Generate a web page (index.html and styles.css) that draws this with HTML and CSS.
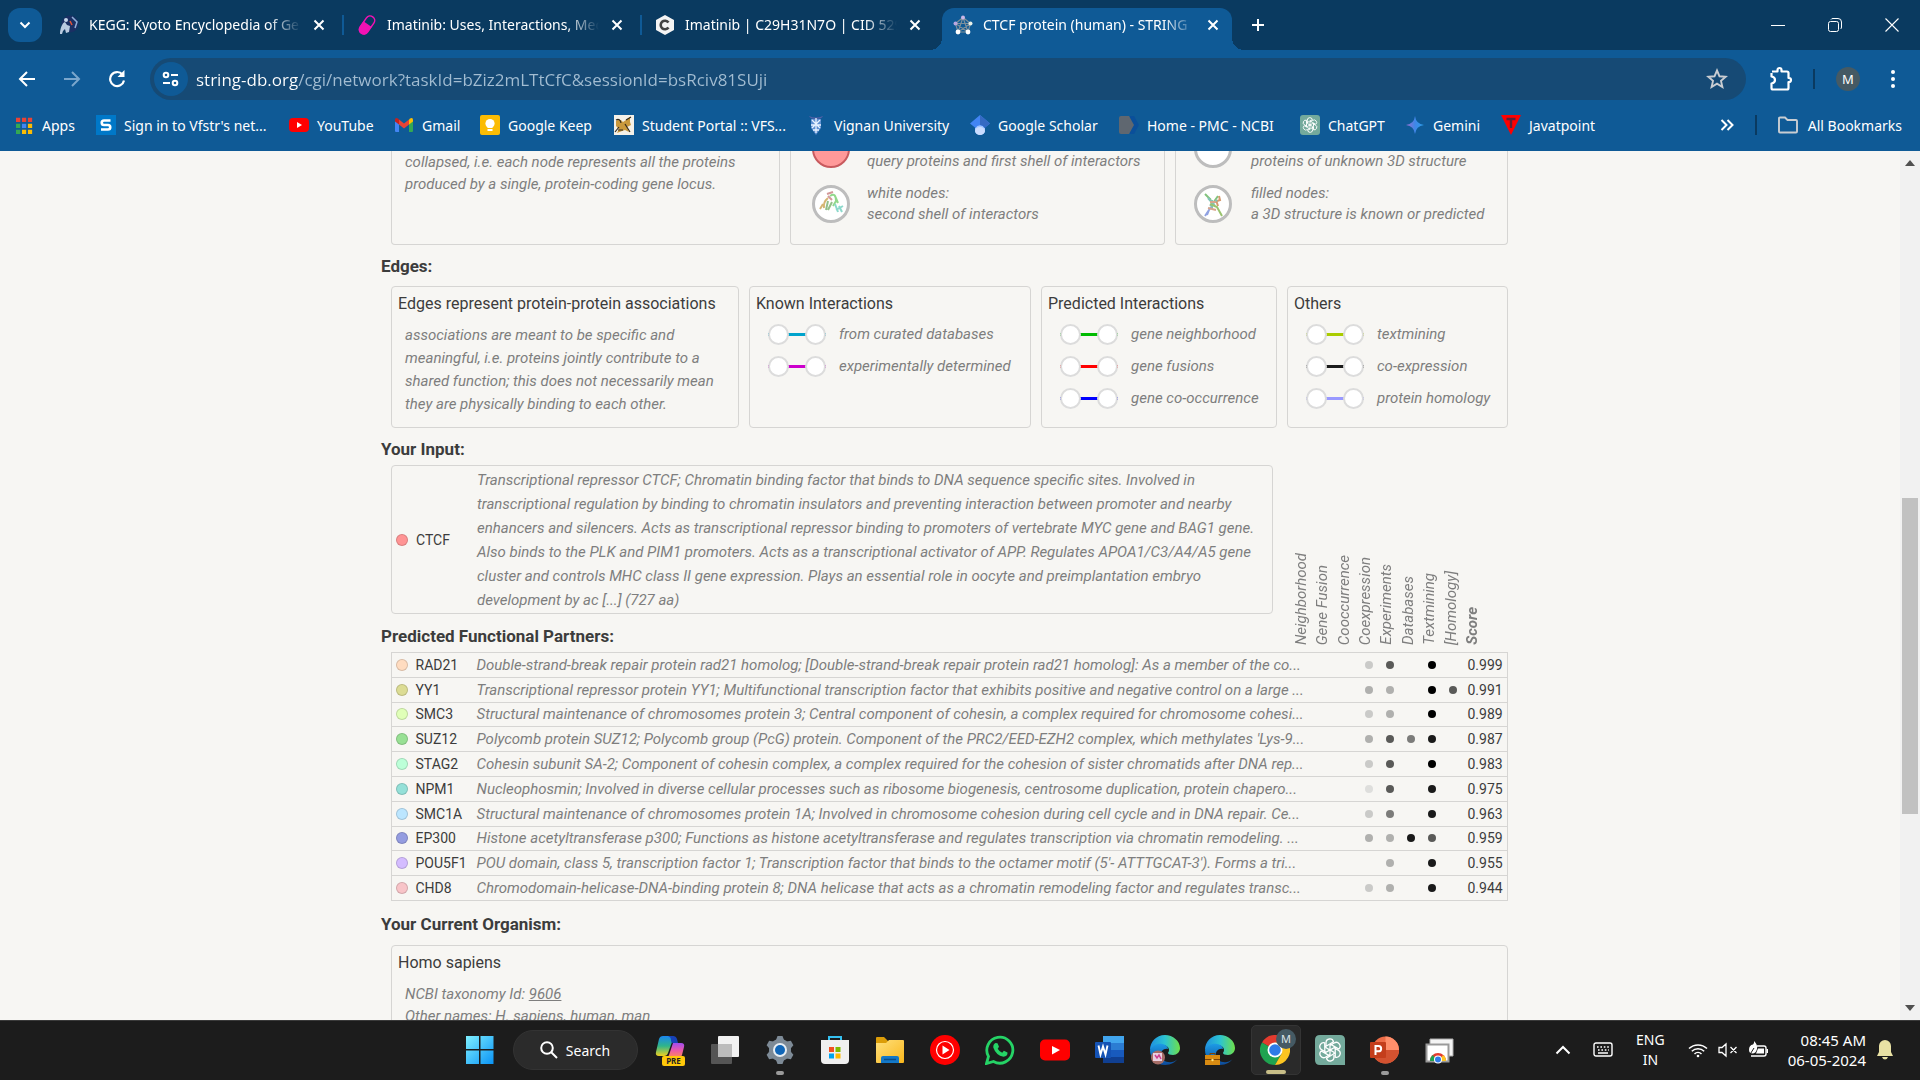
FILE: index.html
```html
<!DOCTYPE html>
<html lang="en">
<head>
<meta charset="utf-8">
<title>CTCF protein (human) - STRING interaction network</title>
<link rel="stylesheet" href="styles.css">
</head>
<body>
<svg class="defs" aria-hidden="true">
  <defs>
    <linearGradient id="gWin" x1="0" y1="0" x2="1" y2="1"><stop offset="0" stop-color="#7ff0ff"/><stop offset="1" stop-color="#0a93f5"/></linearGradient>
    <linearGradient id="gEdgeTop" x1="0" y1="0" x2="1" y2="0"><stop offset="0" stop-color="#1f8fe0"/><stop offset=".5" stop-color="#2cc3d2"/><stop offset="1" stop-color="#6fe04a"/></linearGradient>
    <linearGradient id="gEdgeLow" x1="0" y1="0" x2="0" y2="1"><stop offset="0" stop-color="#1d9be6"/><stop offset="1" stop-color="#0c4a9a"/></linearGradient>
    <linearGradient id="gFolder" x1="0" y1="0" x2="1" y2="1"><stop offset="0" stop-color="#ffe07c"/><stop offset="1" stop-color="#f9b71c"/></linearGradient>
    <linearGradient id="gGem" x1="0" y1="0" x2="1" y2="0"><stop offset="0" stop-color="#9a6fd0"/><stop offset=".5" stop-color="#3f86e8"/><stop offset="1" stop-color="#2aa0ea"/></linearGradient>
    <linearGradient id="gCopA" x1="0" y1="0" x2="0" y2="1"><stop offset="0" stop-color="#1a86f0"/><stop offset=".5" stop-color="#2fb58a"/><stop offset="1" stop-color="#f0d020"/></linearGradient>
    <linearGradient id="gCopB" x1="0" y1="0" x2="0" y2="1"><stop offset="0" stop-color="#a04cf0"/><stop offset=".5" stop-color="#ec5aa8"/><stop offset="1" stop-color="#ff9050"/></linearGradient>
    <symbol id="close" viewBox="0 0 20 20"><path d="M5.500 5.500l9 9m0-9l-9 9" stroke="#fff" stroke-width="2" fill="none"/></symbol>
    <symbol id="knot" viewBox="0 0 24 24"><g fill="none" stroke="#fff" stroke-width="1.300"><path id="petal" d="M12 12.200V7.400l4.200-2.400a3.800 3.800 0 0 1 4.600 6l-4.600-2.600-4.200-2.400"/><use href="#petal" transform="rotate(60 12 12)"/><use href="#petal" transform="rotate(120 12 12)"/><use href="#petal" transform="rotate(180 12 12)"/><use href="#petal" transform="rotate(240 12 12)"/><use href="#petal" transform="rotate(300 12 12)"/></g></symbol>
    <symbol id="chrome" viewBox="0 0 30 30"><path d="M15 15L2 7.500A15 15 0 0 1 28 7.500H15z" fill="#e33b2e"/><path d="M15 15L2 7.500a15 15 0 0 0 13 22.500l6.500-11.300z" fill="#1fa350"/><path d="M15 7.500h13A15 15 0 0 1 15 30l6.500-11.300z" fill="#fcc521"/><circle cx="15" cy="15" r="7.500" fill="#fff"/><circle cx="15" cy="15" r="5.800" fill="#2f7be8"/></symbol>
    <symbol id="edge" viewBox="0 0 30 30"><path d="M15 0C23 0 30 6 30 13c0 4-3 7-7 7-3 0-5-1-5-2s1-1 1-3c0-3-3-5-7-5C6 10 0 15 0 15 0 7 6 0 15 0z" fill="url(#gEdgeTop)"/><path d="M0 15C2 11 7 8 12 9c4 .500 6 3 6 5-4-1-8 2-7 7 1 4 5 7 11 6 3-.500 5-2 6-4-2 4-7 7-13 7C6 30 0 23 0 15z" fill="url(#gEdgeLow)"/></symbol>
  </defs>
</svg>

<header class="browser">
  <div class="tabstrip">
    <button class="tab-search" aria-label="Search tabs"><svg width="14" height="14" viewBox="0 0 14 14"><path d="M2.500 4.500L7 9l4.500-4.500" stroke="#fff" stroke-width="2" fill="none"/></svg></button>
    <div class="tabs">
      <div class="tab">
        <svg class="fav" viewBox="0 0 20 20"><circle cx="11" cy="9" r="8.500" fill="#1b2f63"/><path d="M1 19c0-5 2-11 5-12l2 3 3 1-1 6-3 1-1-4-2 2-1 3z" fill="#b9cbe0"/><circle cx="7" cy="5" r="2" fill="#c5d6ea"/><path d="M13 2l5 5-2 6" stroke="#8fb0d8" stroke-width="1.500" fill="none"/><path d="M11 6l2 4" stroke="#e0563b" stroke-width="1.500"/></svg>
        <span class="tab-title">KEGG: Kyoto Encyclopedia of Ge</span><button class="tab-close" aria-label="Close tab"><svg width="20" height="20"><use href="#close"/></svg></button>
      </div>
      <div class="tab divided">
        <svg class="fav" viewBox="0 0 20 20"><g transform="rotate(35 10 10)"><rect x="5.500" y="0" width="9" height="20" rx="4.500" fill="none" stroke="#f312b4" stroke-width="1.500"/><path d="M5 9h10v6.500a5 5 0 0 1-10 0z" fill="#f312b4"/></g></svg>
        <span class="tab-title">Imatinib: Uses, Interactions, Mec</span><button class="tab-close" aria-label="Close tab"><svg width="20" height="20"><use href="#close"/></svg></button>
      </div>
      <div class="tab divided">
        <svg class="fav" viewBox="0 0 20 20"><path d="M10 0l9 5v10l-9 5-9-5V5z" fill="#f4f4f4"/><path d="M13.500 7.500A4.300 4.300 0 1 0 13.500 12.500" fill="none" stroke="#444" stroke-width="2.600"/></svg>
        <span class="tab-title">Imatinib | C29H31N7O | CID 529</span><button class="tab-close" aria-label="Close tab"><svg width="20" height="20"><use href="#close"/></svg></button>
      </div>
      <div class="tab active">
        <svg class="fav" viewBox="0 0 20 20"><path d="M10 2.500L2.500 8.500 5 17h10l2.500-8.500zM10 2.500L5 17M10 2.500L15 17M2.500 8.500h15L5 17M2.500 8.500L15 17" fill="none" stroke="#7d8f9a" stroke-width="1.200"/><circle cx="10" cy="2.500" r="2" fill="#c9b7e8"/><circle cx="2.500" cy="8.500" r="2" fill="#b9a7e0"/><circle cx="17.500" cy="8.500" r="2" fill="#e8f0e8"/><circle cx="5" cy="17" r="2.400" fill="#fff"/><circle cx="15" cy="17" r="2.400" fill="#fff"/></svg>
        <span class="tab-title">CTCF protein (human) - STRING</span><button class="tab-close" aria-label="Close tab"><svg width="20" height="20"><use href="#close"/></svg></button>
      </div>
    </div>
    <button class="new-tab" aria-label="New tab"><svg width="14" height="14"><path d="M7 1v12M1 7h12" stroke="#fff" stroke-width="2"/></svg></button>
    <div class="window-controls">
      <button aria-label="Minimize"><svg width="14" height="14"><path d="M0 7.500h14" stroke="#fff"/></svg></button>
      <button aria-label="Restore"><svg width="14" height="14" fill="none" stroke="#fff"><rect x=".5" y="3.500" width="10" height="10" rx="2"/><path d="M3 1.500q.500-1 2-1h5q3.500 0 3.500 3.500v5q0 1.500-1 2"/></svg></button>
      <button aria-label="Close"><svg width="14" height="14"><path d="M.500 .500l13 13m0-13l-13 13" stroke="#fff" stroke-width="1.100"/></svg></button>
    </div>
  </div>

  <div class="toolbar">
    <nav class="nav-buttons">
      <button aria-label="Back"><svg width="18" height="18"><path d="M17 9H2.500M9 2L2 9l7 7" stroke="#fff" stroke-width="2" fill="none"/></svg></button>
      <button aria-label="Forward"><svg width="18" height="18"><path d="M1 9h14.500M9 2l7 7-7 7" stroke="#7aa6cc" stroke-width="2" fill="none"/></svg></button>
      <button aria-label="Reload"><svg width="18" height="18"><path d="M14.500 4.500A7 7 0 1 0 16 10.500" stroke="#fff" stroke-width="2.200" fill="none"/><path d="M16.500 0v7h-7z" fill="#fff"/></svg></button>
    </nav>
    <div class="omnibox">
      <button class="site-info" aria-label="View site information"><svg width="18" height="16" fill="none" stroke="#fff" stroke-width="2"><circle cx="4" cy="4" r="2.300"/><path d="M9 4h7M1 12h7"/><circle cx="13" cy="12" r="2.300"/></svg></button>
      <input class="url" type="text" aria-label="Address" value="string-db.org/cgi/network?taskId=bZiz2mLTtCfC&amp;sessionId=bsRciv81SUji">
      <button class="star" aria-label="Bookmark this tab"><svg width="22" height="22" viewBox="0 0 22 22"><path d="M11 2.500l2.500 5.800 6.200.500-4.700 4.100 1.400 6.100-5.400-3.300L5.600 19 7 12.900 2.300 8.800l6.200-.500z" stroke="#c9cdd2" stroke-width="1.900" fill="none"/></svg></button>
    </div>
    <div class="tool-actions">
      <button aria-label="Extensions"><svg width="24" height="26" viewBox="0 0 24 26"><path d="M3 5.500h5.500V4a2 2 0 0 1 4 0v1.500H18q1.500 0 1.500 1.500v5h.500a2 2 0 0 1 0 4h-.500v6q0 1.500-1.500 1.500H4q-1.500 0-1.500-1.500v-4.500q3.500-.500 3.500-3.500t-3.500-3.500V7" stroke="#fff" stroke-width="2.200" fill="none" stroke-linejoin="round"/></svg></button>
      <span class="rule"></span>
      <button class="avatar" aria-label="Profile">M</button>
      <button aria-label="Menu"><svg width="6" height="20" fill="#fff"><circle cx="3" cy="3" r="2"/><circle cx="3" cy="10" r="2"/><circle cx="3" cy="17" r="2"/></svg></button>
    </div>
  </div>

  <nav class="bookmarks">
    <div class="bookmark-list">
      <a href="#"><svg viewBox="0 0 20 20" class="narrow"><g fill="#ea4335"><path d="M0 1h5v5H0zM7 1h5v5H7zM14 1h5v5h-5z"/></g><path d="M0 8h5v5H0zM0 15h5v5H0z" fill="#34a853"/><path d="M7 8h5v5H7z" fill="#4285f4"/><path d="M7 15h5v5H7zM14 8h5v5h-5zM14 15h5v5h-5z" fill="#fbbc04"/></svg>Apps</a>
      <a href="#"><svg viewBox="0 0 20 20"><path d="M0 0h20v20H0z" fill="#0078c8"/><path d="M14.500 5.500H8a2.200 2.200 0 0 0 0 4.500h4a2.200 2.200 0 0 1 0 4.500H5" stroke="#fff" stroke-width="2.600" fill="none"/></svg>Sign in to Vfstr's net...</a>
      <a href="#"><svg viewBox="0 0 20 20"><rect y="3" width="20" height="14" rx="4" fill="#f00"/><path d="M8 7l5 3-5 3z" fill="#fff"/></svg>YouTube</a>
      <a href="#"><svg viewBox="0 0 20 20"><path d="M1 5v11q0 1 1 1h3V8z" fill="#4285f4"/><path d="M19 5v11q0 1-1 1h-3V8z" fill="#34a853"/><path d="M5 4.500l5 4 5-4v5l-5 4-5-4z" fill="#ea4335"/><path d="M1 5q0-3 3-1.500L5 4.500v5L1 6.500z" fill="#c5221f"/><path d="M19 5q0-3-3-1.500l-1 1v5l4-3z" fill="#fbbc04"/></svg>Gmail</a>
      <a href="#"><svg viewBox="0 0 20 20"><rect width="20" height="20" rx="2" fill="#fbbc04"/><circle cx="10" cy="8.500" r="4.600" fill="#fff"/><path d="M7.500 11h5v2h-5zM7.500 14h5v2h-5z" fill="#fff"/></svg>Google Keep</a>
      <a href="#"><svg viewBox="0 0 20 20"><path d="M0 0h20v20H0z" fill="#f5f1e8"/><path d="M2 6q4-3 7 1l3-2 4-3v5l1 3-4 2 2 5-4-2-3 1-5 2 2-4-3-3z" fill="#c9993c"/><path d="M2 5q4-2 5 3M5 12l-4 5M11 9l5 8M12 5l5-3M4 15h5" stroke="#332a1c" stroke-width="1.200" fill="none"/></svg>Student Portal :: VFS...</a>
      <a href="#"><svg viewBox="0 0 20 20"><path d="M3 1q7 3 14 0-1 3-7 3T3 1z" fill="#5261a8"/><path d="M5 4h10v9l-5 7-5-7z" fill="#5e8fd0"/><path d="M10 3v15M6 5l8 8M14 5l-8 8M5 10h10M7 15h6" stroke="#e9f3ff" stroke-width="1.300"/></svg>Vignan University</a>
      <a href="#"><svg viewBox="0 0 20 20"><path d="M10 8a5 5 0 0 1 5 5v2a5 5 0 0 1-10 0v-2a5 5 0 0 1 5-5z" fill="#a0c3ff"/><path d="M10 0L0 8.500 5.500 13a5 5 0 0 1 9 0L20 8.500z" fill="#4285f4"/><path d="M10 0v10q3 0 4.500 3L20 8.500z" fill="#356ac3"/><ellipse cx="10" cy="16" rx="5" ry="4" fill="#c9dcff"/></svg>Google Scholar</a>
      <a href="#"><svg viewBox="0 0 20 20"><path d="M11 1h4l5 9-5 9h-4z" fill="#0a4f9a"/><path d="M2 1h8l5 9-5 9H2q-2 0-2-2V3q0-2 2-2z" fill="#5f6770"/></svg>Home - PMC - NCBI</a>
      <a href="#"><svg viewBox="0 0 20 20"><rect width="20" height="20" rx="3" fill="#74aa9c"/><use href="#knot" x="2" y="2" width="16" height="16"/></svg>ChatGPT</a>
      <a href="#"><svg viewBox="0 0 20 20"><path d="M10 1q1 8 9 9-8 1-9 9-1-8-9-9 8-1 9-9z" fill="url(#gGem)"/></svg>Gemini</a>
      <a href="#"><svg viewBox="0 0 20 20"><path d="M0 0h20L10 20z" fill="#f00"/><path d="M5.500 4h9M10 4v9" stroke="#5b2238" stroke-width="2.400"/></svg>Javatpoint</a>
    </div>
    <button class="more" aria-label="More bookmarks"><svg width="14" height="12"><path d="M1.500 1l5 5-5 5M7.500 1l5 5-5 5" stroke="#fff" stroke-width="2" fill="none"/></svg></button>
    <span class="rule"></span>
    <a class="all" href="#"><svg viewBox="0 0 22 18"><path d="M2 15.500v-13q0-1 1-1h5l2.500 2.500H19q1 0 1 1v10.500q0 1-1 1H3q-1 0-1-1z" fill="none" stroke="#c9cdd2" stroke-width="1.900"/></svg>All Bookmarks</a>
  </nav>
</header>

<div class="viewport">
  <main class="page">
    <div class="content">
      <div class="cards nodes">
        <section class="card first"><p class="note">collapsed, i.e. each node represents all the proteins<br>produced by a single, protein-coding gene locus.</p></section>
        <section class="card">
          <div class="node-row top"><svg width="40" height="20" viewBox="0 20 40 20"><circle cx="20" cy="18" r="18" fill="#ff9999" stroke="#c85a5e" stroke-width="2"/></svg><p>query proteins and first shell of interactors</p></div>
          <div class="node-row"><svg width="40" height="40"><circle cx="20" cy="20" r="17.500" fill="#fff" stroke="#bdbdbd" stroke-width="3"/><g fill="none" stroke-width="2" opacity=".8"><path d="M16 10l6-2M17 12l4 4" stroke="#c98080"/><path d="M19 12q6-4 6 5l-3 5M24 12l3 7" stroke="#78cf70"/><path d="M17 14q-5 4-4 10M12 20l-3 5" stroke="#cba552"/><path d="M17 17l-2 9M21 18l-4 8" stroke="#79b16c"/><path d="M24 20l3 8M28 22l3 6M25 26l7-4" stroke="#70d0c0"/></g></svg><p>white nodes:<br>second shell of interactors</p></div>
        </section>
        <section class="card">
          <div class="node-row top"><svg width="40" height="20" viewBox="0 20 40 20"><circle cx="20" cy="18" r="17.500" fill="#fff" stroke="#bdbdbd" stroke-width="3"/></svg><p>proteins of unknown 3D structure</p></div>
          <div class="node-row"><svg width="40" height="40"><circle cx="20" cy="20" r="17.500" fill="#fff" stroke="#bdbdbd" stroke-width="3"/><g fill="none" stroke-width="2" opacity=".9"><path d="M12 10l6 6M25 12l-5 7" stroke="#75bd70"/><path d="M26 12l1 4-6 2M23 16l2 6" stroke="#cf8f60"/><path d="M15 14l7 8M17 22l7-6M19 16v9" stroke="#75bdb0"/><path d="M17 20l7 3 5 9" stroke="#90bd60"/><path d="M18 23l-6 9M16 26l-2 5" stroke="#8599df"/><path d="M15 24l8 2M17 18h6" stroke="#d39c80"/></g></svg><p>filled nodes:<br>a 3D structure is known or predicted</p></div>
        </section>
      </div>

      <h2>Edges:</h2>
      <div class="cards edges">
        <section class="card"><h3>Edges represent protein-protein associations</h3><p class="note">associations are meant to be specific and<br>meaningful, i.e. proteins jointly contribute to a<br>shared function; this does not necessarily mean<br>they are physically binding to each other.</p></section>
        <section class="card"><h3>Known Interactions</h3>
          <ul><li class="e-database"><i></i>from curated databases</li><li class="e-experiment"><i></i>experimentally determined</li></ul></section>
        <section class="card"><h3>Predicted Interactions</h3>
          <ul><li class="e-neighbor"><i></i>gene neighborhood</li><li class="e-fusion"><i></i>gene fusions</li><li class="e-cooccur"><i></i>gene co-occurrence</li></ul></section>
        <section class="card"><h3>Others</h3>
          <ul><li class="e-text"><i></i>textmining</li><li class="e-coexp"><i></i>co-expression</li><li class="e-homology"><i></i>protein homology</li></ul></section>
      </div>

      <div class="input-area">
        <div class="input-side">
          <h2>Your Input:</h2>
          <section class="card input-card">
            <span class="ball b-ctcf"></span><span class="gene">CTCF</span>
            <p>Transcriptional repressor CTCF; Chromatin binding factor that binds to DNA sequence specific sites. Involved in<br>transcriptional regulation by binding to chromatin insulators and preventing interaction between promoter and nearby<br>enhancers and silencers. Acts as transcriptional repressor binding to promoters of vertebrate MYC gene and BAG1 gene.<br>Also binds to the PLK and PIM1 promoters. Acts as a transcriptional activator of APP. Regulates APOA1/C3/A4/A5 gene<br>cluster and controls MHC class II gene expression. Plays an essential role in oocyte and preimplantation embryo<br>development by ac [...] (727 aa)</p>
          </section>
          <h2 class="partners-title">Predicted Functional Partners:</h2>
        </div>
        <div class="channel-labels"><span>Neighborhood</span><span>Gene Fusion</span><span>Cooccurrence</span><span>Coexpression</span><span>Experiments</span><span>Databases</span><span>Textmining</span><span>[Homology]</span><strong>Score</strong></div>
      </div>

      <table class="partners">
        <colgroup><col class="c-ball"><col class="c-gene"><col><col class="c-dot"><col class="c-dot"><col class="c-dot"><col class="c-dot"><col class="c-dot"><col class="c-dot"><col class="c-dot"><col class="c-dot"><col class="c-score"></colgroup>
        <tbody>
        <tr><td><span class="ball b-rad21"></span></td><td>RAD21</td><td>Double-strand-break repair protein rad21 homolog; [Double-strand-break repair protein rad21 homolog]: As a member of the co...</td><td></td><td></td><td></td><td><b class="d1"></b></td><td><b class="d4"></b></td><td></td><td><b class="d6"></b></td><td></td><td>0.999</td></tr>
        <tr><td><span class="ball b-yy1"></span></td><td>YY1</td><td>Transcriptional repressor protein YY1; Multifunctional transcription factor that exhibits positive and negative control on a large ...</td><td></td><td></td><td></td><td><b class="d2"></b></td><td><b class="d2"></b></td><td></td><td><b class="d6"></b></td><td><b class="d4"></b></td><td>0.991</td></tr>
        <tr><td><span class="ball b-smc3"></span></td><td>SMC3</td><td>Structural maintenance of chromosomes protein 3; Central component of cohesin, a complex required for chromosome cohesi...</td><td></td><td></td><td></td><td><b class="d1"></b></td><td><b class="d2"></b></td><td></td><td><b class="d6"></b></td><td></td><td>0.989</td></tr>
        <tr><td><span class="ball b-suz12"></span></td><td>SUZ12</td><td>Polycomb protein SUZ12; Polycomb group (PcG) protein. Component of the PRC2/EED-EZH2 complex, which methylates 'Lys-9...</td><td></td><td></td><td></td><td><b class="d2"></b></td><td><b class="d4"></b></td><td><b class="d3"></b></td><td><b class="d5"></b></td><td></td><td>0.987</td></tr>
        <tr><td><span class="ball b-stag2"></span></td><td>STAG2</td><td>Cohesin subunit SA-2; Component of cohesin complex, a complex required for the cohesion of sister chromatids after DNA rep...</td><td></td><td></td><td></td><td><b class="d1"></b></td><td><b class="d4"></b></td><td></td><td><b class="d6"></b></td><td></td><td>0.983</td></tr>
        <tr><td><span class="ball b-npm1"></span></td><td>NPM1</td><td>Nucleophosmin; Involved in diverse cellular processes such as ribosome biogenesis, centrosome duplication, protein chapero...</td><td></td><td></td><td></td><td><b class="d0"></b></td><td><b class="d4"></b></td><td></td><td><b class="d5"></b></td><td></td><td>0.975</td></tr>
        <tr><td><span class="ball b-smc1a"></span></td><td>SMC1A</td><td>Structural maintenance of chromosomes protein 1A; Involved in chromosome cohesion during cell cycle and in DNA repair. Ce...</td><td></td><td></td><td></td><td><b class="d1"></b></td><td><b class="d3"></b></td><td></td><td><b class="d5"></b></td><td></td><td>0.963</td></tr>
        <tr><td><span class="ball b-ep300"></span></td><td>EP300</td><td>Histone acetyltransferase p300; Functions as histone acetyltransferase and regulates transcription via chromatin remodeling. ...</td><td></td><td></td><td></td><td><b class="d2"></b></td><td><b class="d2"></b></td><td><b class="d5"></b></td><td><b class="d4"></b></td><td></td><td>0.959</td></tr>
        <tr><td><span class="ball b-pou5f1"></span></td><td>POU5F1</td><td>POU domain, class 5, transcription factor 1; Transcription factor that binds to the octamer motif (5'- ATTTGCAT-3'). Forms a tri...</td><td></td><td></td><td></td><td></td><td><b class="d2"></b></td><td></td><td><b class="d5"></b></td><td></td><td>0.955</td></tr>
        <tr><td><span class="ball b-chd8"></span></td><td>CHD8</td><td>Chromodomain-helicase-DNA-binding protein 8; DNA helicase that acts as a chromatin remodeling factor and regulates transc...</td><td></td><td></td><td></td><td><b class="d1"></b></td><td><b class="d2"></b></td><td></td><td><b class="d5"></b></td><td></td><td>0.944</td></tr>
        </tbody>
      </table>

      <h2 class="organism-title">Your Current Organism:</h2>
      <section class="card organism"><h3>Homo sapiens</h3><p class="note">NCBI taxonomy Id: <a href="#">9606</a><br>Other names: H. sapiens, human, man</p></section>
    </div>
  </main>
  <div class="scrollbar" aria-hidden="true"><svg width="10" height="6"><path d="M0 6l5-6 5 6z" fill="#505050"/></svg><div class="track"><div class="thumb"></div></div><svg width="10" height="6"><path d="M0 0l5 6 5-6z" fill="#505050"/></svg></div>
</div>

<footer class="taskbar">
  <div class="apps">
    <button aria-label="Start"><svg width="30" height="30" fill="url(#gWin)"><path d="M1 1h13v13H1zM15.500 1h13v13h-13zM1 15.500h13v13.500H1zM15.500 15.500h13v13.500h-13z"/></svg></button>
    <div class="search-slot"><button class="search"><svg width="18" height="18"><circle cx="7" cy="7" r="5.800" fill="none" stroke="#fff" stroke-width="2"/><path d="M11 11l6 6" stroke="#fff" stroke-width="2"/></svg>Search</button></div>
    <button aria-label="Copilot"><svg width="30" height="32" viewBox="0 0 30 32"><path d="M8 2h8q3 0 4 3l1 3h-4l-4 11q-1 3-4 3H4q-4 0-3-4L4 5q1-3 4-3z" fill="url(#gCopA)"/><path d="M13 2h5q3 0 4 3l1 4h-5q-2 0-2-3t-3-4z" fill="#1742b8"/><path d="M18 9h8q4 0 3 4l-2 8q-1 3-4 3H11q2 0 3-3z" fill="url(#gCopB)"/><rect x="7" y="22" width="23" height="10" rx="2" fill="#ffc80a"/><text x="18.500" y="30" class="pre">PRE</text></svg></button>
    <button aria-label="Task view"><svg width="30" height="30"><rect x="8" y="1" width="21" height="21" rx="1" fill="#f1f1f1"/><rect x="1" y="9" width="21" height="20" rx="1" fill="#555"/><path d="M8 9h14v13H8z" fill="#bcbcbc"/></svg></button>
    <button class="running" aria-label="Settings"><svg width="30" height="30" viewBox="0 0 30 30"><g fill="#7d8a96"><circle cx="15" cy="15" r="11"/><path id="tooth" d="M11 5l1.500-4h5L19 5v20l-1.500 4h-5L11 25z"/><use href="#tooth" transform="rotate(60 15 15)"/><use href="#tooth" transform="rotate(120 15 15)"/></g><circle cx="15" cy="15" r="7" fill="#e7eef4"/><circle cx="15" cy="15" r="5" fill="#1066b8"/></svg></button>
    <button aria-label="Microsoft Store"><svg width="30" height="30"><path d="M9 6V2h12v4" stroke="#35c1f1" stroke-width="2" fill="none"/><path d="M1 5h28v20q0 4-4 4H5q-4 0-4-4z" fill="#f0f0f0"/><path d="M9 12h5v5H9z" fill="#f25022"/><path d="M15.500 12h5v5h-5z" fill="#7fba00"/><path d="M9 18.500h5v5H9z" fill="#00a4ef"/><path d="M15.500 18.500h5v5h-5z" fill="#ffb900"/></svg></button>
    <button aria-label="File Explorer"><svg width="30" height="30"><path d="M1 3q0-1 1-1h7l4 4v6H1z" fill="#dc9d08"/><path d="M1 8h10l3-3h14q1 0 1 1v21q0 1-1 1H2q-1 0-1-1z" fill="url(#gFolder)"/><path d="M6 28v-5q0-2 2-2h14q2 0 2 2v5z" fill="#1378c8"/><path d="M9 24.500h12" stroke="#0b4d88" stroke-width="1.500"/></svg></button>
    <button aria-label="YouTube Music"><svg width="30" height="30"><circle cx="15" cy="15" r="15" fill="#f00"/><circle cx="15" cy="15" r="8.500" fill="none" stroke="#fff" stroke-width="1.200"/><path d="M12.500 10.500l7 4.500-7 4.500z" fill="#fff"/></svg></button>
    <button aria-label="WhatsApp"><svg width="30" height="30"><path d="M1.500 28.500l2-7A13 13 0 1 1 8.500 26.500z" fill="none" stroke="#25d366" stroke-width="2.800"/><path d="M10.500 8l2 .300 1.500 3.500-1.300 2q1.500 2.800 4.500 4l1.700-2 3.600 1.700q.300 4-4 4.200Q11 20.500 8.300 12.500 8 9 10.500 8z" fill="#25d366"/></svg></button>
    <button aria-label="YouTube"><svg width="30" height="30"><rect y="4.500" width="30" height="21" rx="5" fill="#f00"/><path d="M12 11l8 4-8 4.500z" fill="#fff"/></svg></button>
    <button aria-label="Word"><svg width="30" height="30"><path d="M8 1h21v7H8z" fill="#41a5ee"/><path d="M8 8h21v7H8z" fill="#2b7cd3"/><path d="M8 15h21v7H8z" fill="#185abd"/><path d="M8 22h21v6H8z" fill="#103f91"/><rect y="7" width="16" height="16" rx="1" fill="#1553b5"/><path d="M3.500 10.500l2 9 2.500-8 2.500 8 2-9" stroke="#fff" stroke-width="1.900" fill="none"/></svg></button>
    <button aria-label="Edge profile 1"><svg width="30" height="30"><use href="#edge"/><circle cx="8" cy="22.500" r="7" fill="#a56d66"/><path d="M3 18h9v8H3z" fill="#ead0e0"/><path d="M5 20l2 3 2-3 2 4" stroke="#ce3d91" stroke-width="1.500" fill="none"/></svg></button>
    <button aria-label="Edge profile 2"><svg width="30" height="30"><use href="#edge"/><path d="M0 20h15v10H0z" fill="#d88b12"/><path d="M0 24.500h15M5 20v-1.500h5V20" stroke="#7a4306" fill="none"/><circle cx="7.500" cy="25" r="1.200" fill="#ffe37a"/></svg></button>
    <button class="current" aria-label="Chrome"><svg width="36" height="36" viewBox="0 0 36 36"><use href="#chrome" x="0" y="6" width="30" height="30"/><circle cx="26" cy="10" r="10" fill="#455a64"/><text x="26" y="14" class="badge-m">M</text></svg></button>
    <button aria-label="ChatGPT"><svg width="30" height="30"><path d="M5 0h20q5 0 5 5v25H5q-5 0-5-5V5q0-5 5-5z" fill="#74aa9c"/><use href="#knot" x="3" y="3" width="24" height="24"/></svg></button>
    <button class="running" aria-label="PowerPoint"><svg width="30" height="30"><circle cx="15.500" cy="15" r="13.500" fill="#ed6c47"/><path d="M15.500 1.500A13.500 13.500 0 0 1 29 15H15.500z" fill="#ff8f6b"/><path d="M2 15h27a13.500 13.500 0 0 1-27 0z" fill="#d35230"/><rect y="7" width="16" height="16" rx="1" fill="#c43e1c"/><path d="M5.500 20v-9h3a2.500 2.500 0 0 1 0 5.300h-3" stroke="#fff" stroke-width="2" fill="none"/></svg></button>
    <button aria-label="Remote Desktop"><svg width="30" height="30"><path d="M5 4h23v17H5z" fill="#f4f4f4" stroke="#aaa"/><path d="M1.500 9.500h22v17h-22z" fill="#fff" stroke="#999" stroke-width="2"/><path d="M5 26a8 8 0 0 1 16 0z" fill="#e33b2e"/><path d="M5 26q0-4 3-6l4 6z" fill="#1fa350"/><path d="M21 26q0-4-3-6l-4 6z" fill="#fcc521"/><circle cx="13" cy="24.500" r="4" fill="#fff"/><circle cx="13" cy="24.500" r="3" fill="#2f7be8"/></svg></button>
  </div>
  <div class="tray">
    <svg width="16" height="10"><path d="M1.500 8.500L8 2l6.500 6.500" stroke="#fff" stroke-width="2" fill="none"/></svg>
    <svg width="20" height="16" fill="none" stroke="#fff"><rect x="1" y="1" width="18" height="13" rx="2" stroke-width="1.400"/><path d="M4 5h12M5 8h11" stroke-width="1.600" stroke-dasharray="1.600 1.800"/><path d="M5 11h10" stroke-width="1.500"/></svg>
    <div class="lang"><span>ENG</span><span>IN</span></div>
    <svg width="20" height="16" fill="none" stroke="#fff" stroke-width="1.500"><path d="M1 6.500a13 13 0 0 1 18 0M3.800 9.300a9 9 0 0 1 12.400 0M6.500 12a5 5 0 0 1 7 0"/><circle cx="10" cy="14" r="1.300" fill="#fff" stroke="none"/></svg>
    <svg width="20" height="16" fill="none" stroke="#fff" stroke-width="1.300"><path d="M1 5.500v5h3l4 3.500V2L4 5.500zM12.500 5l6 6m0-6l-6 6"/></svg>
    <svg width="20" height="18"><path d="M9 5h7q2 0 2 2v6q0 2-2 2H3" fill="none" stroke="#fff" stroke-width="1.400"/><path d="M10 7.500h6v5h-8zM18.500 8h1.500v4h-1.500z" fill="#fff"/><path d="M1 9Q1 4 5 3.500 6.500 3 6 0q4 4 3 8-1 4-4 4.500Q1 12.500 1 9z" fill="#fff"/><path d="M1 15l5-8" stroke="#1c1c1c"/></svg>
    <div class="clock"><span>08:45 AM</span><span>06-05-2024</span></div>
    <svg width="18" height="20"><path d="M9 0a6 6 0 0 1 6 6v6l2 4H1l2-4V6a6 6 0 0 1 6-6zM6 17h6q-1 2.500-3 2.500T6 17z" fill="#e9e2a4"/></svg>
  </div>
</footer>
</body>
</html>
```
FILE: styles.css
```css
*, *::before, *::after { box-sizing: border-box; }
body { margin: 0; height: 100vh; display: flex; flex-direction: column; overflow: hidden; font-family: "Noto Sans", sans-serif; background: #f7f6f3; }
button { border: 0; padding: 0; background: none; color: inherit; font: inherit; display: flex; align-items: center; justify-content: center; }
a { color: inherit; text-decoration: none; }
svg { display: block; flex: none; }
.defs { position: absolute; width: 0; height: 0; }

/* browser frame */
.browser { flex: none; background: #0f5a96; color: #fff; font-size: 14px; }
.tabstrip { display: flex; align-items: center; height: 50px; background: #0a3a60; }
.tab-search { width: 34px; height: 34px; margin: 0 2px 0 8px; border-radius: 12px; background: #0f5a96; }
.tabs { display: flex; align-self: stretch; }
.tab { position: relative; display: flex; align-items: center; width: 298px; padding: 0 13px 0 15px; }
.fav { width: 20px; height: 20px; margin-right: 10px; }
.tab-title { flex: 1; overflow: hidden; white-space: nowrap; line-height: 24px; mask-image: linear-gradient(90deg, #000 180px, transparent 212px); }
.tab-close { width: 20px; height: 20px; }
.tab.divided::before { content: ""; position: absolute; left: 0; top: 15px; width: 2px; height: 20px; background: #0f5a96; }
.tab.active { z-index: 0; }
.tab.active::before { content: ""; position: absolute; z-index: -1; inset: 8px 4px 0; border-radius: 12px 12px 0 0; background: #0f5a96; }
.tab.active::after { content: ""; position: absolute; z-index: -1; left: -8px; right: -8px; bottom: 0; height: 12px; background: radial-gradient(circle at 0 0, transparent 12px, #0f5a96 12px) left / 12px 12px no-repeat, radial-gradient(circle at 100% 0, transparent 12px, #0f5a96 12px) right / 12px 12px no-repeat; }
.new-tab { width: 34px; height: 34px; margin-left: 5px; }
.window-controls { display: flex; margin-left: auto; }
.window-controls button { width: 57px; height: 48px; }

.toolbar { display: flex; align-items: center; height: 57px; padding: 0 10px 0 5px; }
.nav-buttons { display: flex; gap: 1px; }
.nav-buttons button { width: 44px; height: 40px; }
.omnibox { flex: 1; display: flex; align-items: center; height: 42px; margin: 1px 0 0 11px; padding: 0 18px 0 4px; border-radius: 21px; background: #164a75; }
.site-info { width: 34px; height: 34px; border-radius: 17px; background: #0f5a96; }
.url { flex: 1; height: 32px; margin-left: 8px; padding: 0; border: 0; outline: 0; font: 17px "Open Sans", sans-serif; color: transparent; background: linear-gradient(90deg, #fff 102px, #a3bdd2 102px) text; }
.tool-actions { display: flex; align-items: center; margin-left: 18px; }
.tool-actions button { width: 34px; height: 34px; }
.rule { width: 2px; height: 20px; background: #0a3a60; }
.tool-actions .rule { margin: 0 21px 0 15px; }
.tool-actions .avatar { width: 24px; height: 24px; margin-right: 16px; border-radius: 12px; background: #455a64; font-size: 13px; }

.bookmarks { display: flex; align-items: center; height: 44px; padding: 0 18px 8px 16px; }
.bookmarks a { display: flex; align-items: center; white-space: nowrap; }
.bookmarks a svg { width: 20px; height: 20px; margin-right: 8px; }
.bookmarks a svg.narrow { width: 17px; height: 17px; margin-right: 9px; }
.bookmark-list { flex: 1; display: grid; grid-template-columns: 80px 193px 105px 86px 134px 192px 164px 149px 181px 105px 96px auto; }
.more { margin-right: 21px; }
.bookmarks .all { margin-left: 20px; }
.bookmarks .all svg { width: 22px; height: 18px; margin-right: 9px; }

/* page */
.viewport { flex: 1; min-height: 0; display: flex; }
.page { flex: 1; min-width: 0; overflow: hidden; font-family: Roboto, sans-serif; font-size: 14px; color: #3c3c3c; }
.content { max-width: 1138px; margin: 0 auto; padding: 0 11px 0 0; }
h2, h3, p, ul { margin: 0; padding: 0; }
h2 { font-size: 17px; line-height: 24px; font-weight: 700; }
h3 { font-size: 16px; line-height: 20px; font-weight: 400; }
.cards { display: grid; gap: 10px; margin-left: 10px; }
.card { border: 1px solid #d6d5d3; border-radius: 4px; padding: 7px 6px; }
.note { margin: 10px 0 0 7px; font-size: 15px; line-height: 22px; font-style: italic; color: #7e7e7e; }

.nodes { grid-template-columns: 389fr 375fr 333fr; height: 94px; margin-bottom: 9px; }
.nodes .card { border-top: 0; border-radius: 0 0 4px 4px; padding-top: 0; }
.nodes .note { margin-top: 0; }
.node-row { display: flex; align-items: center; gap: 16px; padding: 0 0 0 14px; margin-top: 12px; font-size: 15px; font-style: italic; color: #7e7e7e; line-height: 21px; }
.node-row.top { height: 20px; margin-top: 0; }
.nodes .card:last-child .node-row { gap: 18px; padding-left: 11px; }

.edges { grid-template-columns: 348fr 282fr 236fr 221fr; margin-top: 8px; height: 142px; }
.edges .note { line-height: 23px; }
.edges ul { list-style: none; margin: 4px 0 0 12px; }
.edges li { display: flex; align-items: center; gap: 13px; height: 32px; font-size: 15px; font-style: italic; color: #7e7e7e; }
.edges li i { flex: none; position: relative; width: 58px; height: 3px; background: currentColor; }
.edges li i::before, .edges li i::after { content: ""; position: absolute; top: -9px; left: 0; width: 21px; height: 21px; border: 2px solid #dcdcdc; border-radius: 50%; background: #fff; }
.edges li i::after { left: auto; right: 0; }
.e-database i { color: #00a3cc; }
.e-experiment i { color: #cc00cc; }
.e-neighbor i { color: #00bb00; }
.e-fusion i { color: #ff0000; }
.e-cooccur i { color: #0000ff; }
.e-text i { color: #aacc00; }
.e-coexp i { color: #1c1c1c; }
.e-homology i { color: #9999ff; }

.input-area { display: flex; justify-content: space-between; }
.input-side { padding-top: 9px; }
.input-card { display: flex; align-items: center; width: 882px; height: 149px; margin: 4px 0 0 10px; padding: 0 0 0 4px; }
.input-card .gene { flex: none; width: 69px; padding-left: 8px; }
.input-card p { font-size: 15px; line-height: 24px; font-style: italic; color: #7e7e7e; white-space: nowrap; }
.partners-title { margin-top: 10px; }
.channel-labels { display: grid; grid-template-columns: repeat(9, 1fr); width: 193px; margin-right: 25px; padding-bottom: 3px; align-items: end; justify-items: center; font-size: 15px; font-style: italic; color: #7e7e7e; }
.channel-labels > * { writing-mode: vertical-rl; transform: rotate(180deg); line-height: 20px; }

.ball { display: block; flex: none; width: 12px; height: 12px; border: 1px solid rgba(0, 0, 0, .15); border-radius: 50%; }
.b-ctcf { background: #ff9494; }
.b-rad21 { background: #ffdcc0; }
.b-yy1 { background: #dcdc94; }
.b-smc3 { background: #e0ffb8; }
.b-suz12 { background: #98e094; }
.b-stag2 { background: #bcffd8; }
.b-npm1 { background: #94e0d8; }
.b-smc1a { background: #bce6ff; }
.b-ep300 { background: #949ce0; }
.b-pou5f1 { background: #d4bcff; }
.b-chd8 { background: #f8c4c8; }

.partners { table-layout: fixed; width: calc(100% - 10px); height: 249px; margin: 4px 0 0 10px; border-collapse: collapse; border: 1px solid #d6d5d3; }
.partners td { padding: 0; line-height: 20px; white-space: nowrap; border-bottom: 1px solid #d6d5d3; }
.partners td:first-child { padding-left: 4px; }
.partners td:nth-child(3) { font-size: 15px; font-style: italic; color: #7e7e7e; }
.partners b { display: block; width: 8px; height: 8px; margin: 0 auto; border-radius: 50%; background: #000; }
.partners td:last-child { padding-left: 4px; }
.c-ball { width: 24px; }
.c-gene { width: 61px; }
.c-dot { width: 21px; }
.c-score { width: 44px; }
.partners .d0 { background: #dededc; }
.partners .d1 { background: #cacac8; }
.partners .d2 { background: #b0b0ae; }
.partners .d3 { background: #7c7c7a; }
.partners .d4 { background: #5a5a58; }
.partners .d5 { background: #1a1a1a; }

.organism-title { margin-top: 11px; }
.organism { margin: 9px 0 0 10px; height: 120px; }
.organism a { text-decoration: underline; }

.scrollbar { width: 20px; display: flex; flex-direction: column; align-items: center; padding: 9px 0; background: #f1f1f1; }
.track { flex: 1; width: 16px; margin: 3px 0; padding-top: 329px; }
.thumb { height: 316px; background: #c1c1c1; }

/* taskbar */
.taskbar { flex: none; display: grid; grid-template-columns: 1fr auto 1fr; align-items: center; height: 60px; background: #1c1c1c; box-shadow: inset 0 1px #3a3a3a; color: #fff; font-size: 14px; }
.apps { grid-column: 2; display: flex; align-items: center; }
.apps > button { position: relative; width: 55px; height: 50px; }
.search-slot { width: 135px; padding-left: 5px; }
.search { gap: 8px; width: 125px; height: 40px; border-radius: 20px; background: #2b2b2b; font-size: 14px; border: 1px solid #333; }
.apps .current { width: 50px; margin: 0 2px 0 3px; border: 1px solid #343434; border-radius: 5px; background: #2a2a2a; }
.apps .current svg { margin: 0 0 6px 4px; }
.running::after, .current::after { content: ""; position: absolute; bottom: 0; left: 50%; width: 8px; height: 4px; margin-left: -4px; border-radius: 2px; background: #9a9a9a; }
.apps .current::after { width: 20px; margin-left: -10px; background: #c8be88; }
.pre { font: bold 8px "Noto Sans", sans-serif; text-anchor: middle; fill: #222; }
.badge-m { font: 11px "Noto Sans", sans-serif; text-anchor: middle; fill: #dfe6ea; }
.tray { display: flex; align-items: center; justify-content: flex-end; padding-right: 26px; }
.tray > svg { margin-left: 10px; }
.tray > svg:first-child { margin: 0 22px 0 0; }
.tray > svg:nth-child(2) { margin: 0; }
.lang, .clock { display: flex; flex-direction: column; line-height: 20px; }
.lang { align-items: center; margin: 0 13px 0 23px; }
.clock { align-items: flex-end; margin: 0 0 0 20px; font-size: 15px; }
.tray > svg:last-child { margin-left: 10px; }
```
